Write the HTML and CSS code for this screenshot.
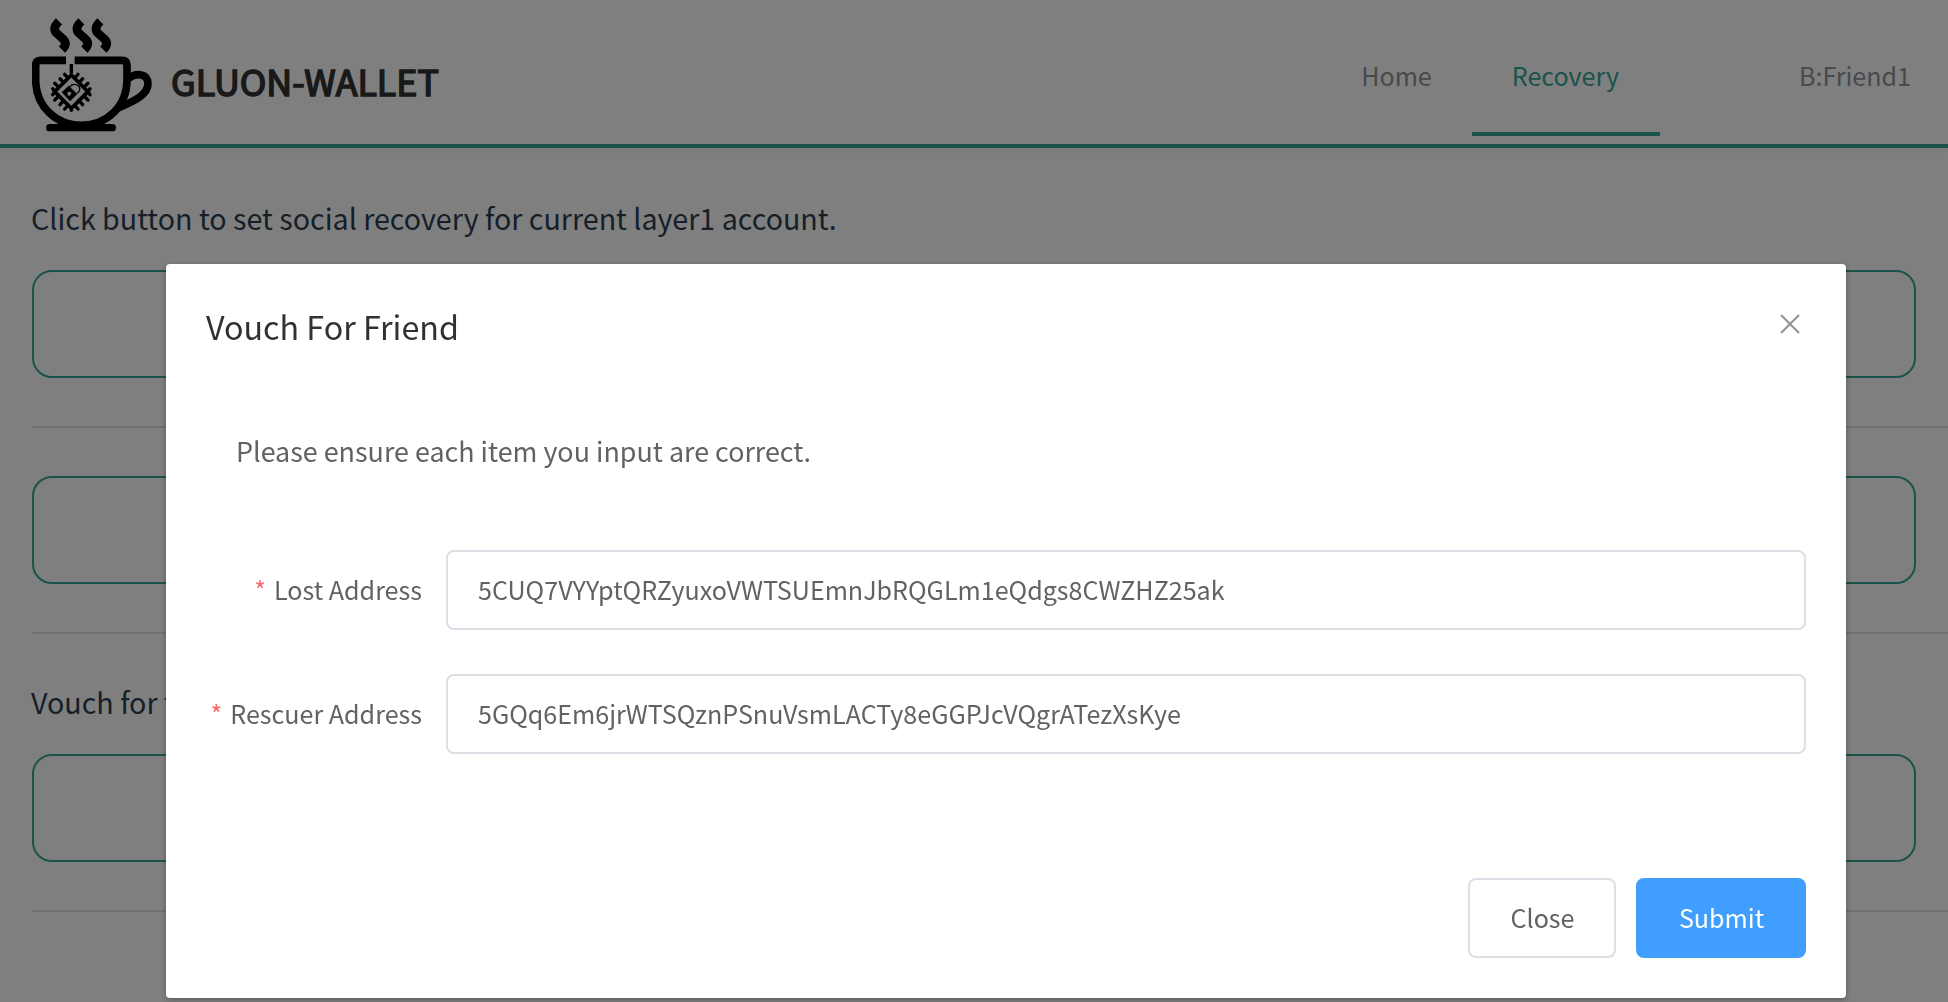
FILE: index.html
```html
<!DOCTYPE html>
<html lang="en">
<head>
<meta charset="utf-8">
<title>Gluon-Wallet</title>
<link rel="stylesheet" href="styles.css">
</head>
<body>
<header class="header">
  <svg class="logo" viewBox="36 24 360 342" aria-hidden="true">
    <g fill="none" stroke="#000">
      <path stroke-width="26" d="M117 34Q97 53 108 68L131 89Q143 102 126 119M184 34Q164 53 175 68L198 89Q210 102 193 119M241 34Q221 53 232 68L255 89Q267 102 250 119"/>
      <path stroke-width="23" d="M138 151H62Q47 151 47 166V208C47 292 110 346 184 346S321 292 321 208V166Q321 151 306 151H164"/>
      <path stroke-width="23" d="M324 206C350 186 384 191 384 221C384 255 340 274 294 294"/>
      <path stroke-width="22" stroke-linecap="round" d="M89 353H277"/>
      <path stroke-width="10" d="M154 162V190"/>
      <g transform="translate(154 245)">
        <path stroke-width="11" d="M0 -50L50 0L0 50L-50 0Z"/>
        <g stroke-width="10" stroke-linecap="round">
          <path id="teeth" d="M10 -41L20 -52M24 -28L34 -39M38 -14L50 -25M50 -2L56 -9"/>
          <use href="#teeth" transform="scale(-1 1)"/>
          <use href="#teeth" transform="scale(-1 -1)"/>
          <use href="#teeth" transform="scale(1 -1)"/>
          <path d="M0 50V56"/>
        </g>
      </g>
      <path stroke-width="4" d="M149 232C157 216 182 224 179 240Q177 246 171 250"/>
    </g>
    <path d="M125 247L146 227L172 252L150 274Z"/>
    <path fill="#fff" d="M144 253Q139 247 146 246Q152 245 155 249L148 258Q143 259 144 253Z"/>
  </svg>
  <h1 class="brand">GLUON-WALLET</h1>
  <nav class="nav">
    <a class="nav-item">Home</a>
    <a class="nav-item active">Recovery</a>
    <a class="nav-item account">B:Friend1</a>
  </nav>
</header>
<main class="main">
  <p class="caption">Click button to set social recovery for current layer1 account.</p>
  <div class="panel"></div>
  <hr class="rule">
  <div class="panel"></div>
  <hr class="rule">
  <p class="caption second">Vouch for t</p>
  <div class="panel"></div>
  <hr class="rule">
</main>
<div class="overlay">
  <section class="dialog">
    <div class="dialog-head">
      <h2 class="dialog-title">Vouch For Friend</h2>
      <svg class="close-icon" viewBox="0 0 20 20"><path d="M1 1L19 19M19 1L1 19"/></svg>
    </div>
    <p class="hint">Please ensure each item you input are correct.</p>
    <div class="form">
      <div class="row">
        <label class="label"><span class="star">*</span>Lost Address</label>
        <div class="input"><span>5CUQ7VYYptQRZyuxoVWTSUEmnJbRQGLm1eQdgs8CWZHZ25ak</span></div>
      </div>
      <div class="row">
        <label class="label"><span class="star">*</span>Rescuer Address</label>
        <div class="input"><span>5GQq6Em6jrWTSQznPSnuVsmLACTy8eGGPJcVQgrATezXsKye</span></div>
      </div>
    </div>
    <div class="actions">
      <button class="btn plain">Close</button>
      <button class="btn primary">Submit</button>
    </div>
  </section>
</div>
</body>
</html>
```
FILE: styles.css
```css
* { box-sizing: border-box; }
body {
  margin: 0;
  height: 1002px;
  overflow: hidden;
  background: #fff;
  color: #2c3e50;
  font-family: "Noto Sans CJK SC", "Noto Sans", sans-serif;
  font-size: 25.09px;
}
h1, h2, p { margin: 0; font-weight: 400; }
.header {
  display: flex;
  height: 148px;
  padding-left: 32px;
  border-bottom: 4px solid #35a798;
  box-shadow: 0 2px 4px rgba(0, 0, 0, .08);
}
.logo { width: 120px; height: 114px; margin-top: 18px; }
.brand {
  margin: 60px 0 0 19px;
  color: #333;
  font-size: 35.8px;
  line-height: 40px;
  -webkit-text-stroke: 1.6px #333;
}
.nav { display: flex; height: 136px; margin-left: auto; color: #909399; }
.nav-item {
  padding: 0 40px;
  border-bottom: 4px solid transparent;
  line-height: 150px;
}
.nav-item.active { padding-right: 41px; color: #35a798; border-color: #35a798; }
.nav-item.account { margin-left: 99px; padding-right: 37px; }
.main { padding-left: 32px; }
.caption { height: 122px; margin-left: -1px; padding-top: 50px; font-size: 28.65px; line-height: 40px; }
.caption.second { height: 120px; padding-top: 48px; }
.panel { width: 1884px; height: 108px; border: 2px solid #35a798; border-radius: 20px; }
.rule { height: 2px; margin: 48px 0; border: 0; background: #dcdfe6; }
.rule:has(+ .second) { margin-bottom: 0; }
.overlay { position: fixed; inset: 0; padding: 264px 102px 0 166px; background: rgba(0, 0, 0, .5); }
.dialog {
  height: 734px;
  padding: 40px;
  border-radius: 4px;
  background: #fff;
  box-shadow: 0 2px 6px rgba(0, 0, 0, .3);
  color: #606266;
}
.dialog-head { display: flex; justify-content: space-between; height: 40px; }
.dialog-title { color: #303133; font-size: 32.26px; line-height: 44px; }
.close-icon { width: 20px; height: 20px; margin: 10px 6px 0 0; fill: none; stroke: #909399; stroke-width: 2; }
.hint { margin: 87px 0 0 30px; font-size: 26.88px; line-height: 40px; }
.form { display: flex; flex-direction: column; gap: 44px; margin-top: 79px; }
.row { display: flex; height: 80px; }
.label { width: 240px; padding-right: 24px; line-height: 78px; text-align: right; }
.star { margin-right: 8px; color: #f56c6c; }
.input { flex: 1; padding: 0 30px; border: 2px solid #dcdfe6; border-radius: 8px; line-height: 74px; }
.actions { display: flex; justify-content: flex-end; gap: 20px; margin-top: 124px; }
.btn {
  height: 80px;
  padding: 0 0 2px 1px;
  border: 2px solid #dcdfe6;
  border-radius: 8px;
  background: #fff;
  color: #606266;
  font: inherit;
  line-height: 74px;
}
.plain { width: 148px; }
.primary { width: 170px; border-color: #409eff; background: #409eff; color: #fff; }
```
